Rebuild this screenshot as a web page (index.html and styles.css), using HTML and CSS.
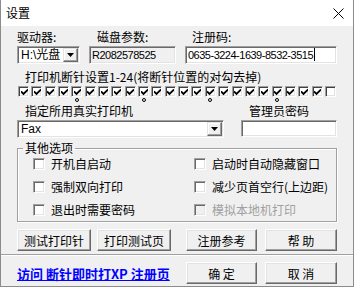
FILE: index.html
```html
<!DOCTYPE html>
<html lang="zh-CN">

<head>
    <meta charset="UTF-8">
    <meta name="viewport" content="width=device-width, initial-scale=1.0">
    <title>设置</title>
    <link rel="stylesheet" href="styles.css">
</head>

<body>
    <div class="window">
        <div class="titlebar">
            <span class="title">设置</span>
            <svg class="close" width="11" height="11" viewBox="0 0 11 11">
                <path d="M0.5 0.5 L10.5 10.5 M10.5 0.5 L0.5 10.5" stroke="#000" stroke-width="1" fill="none" />
            </svg>
        </div>

        <div class="content">
            <div class="fields">
                <div class="field drive">
                    <label>驱动器:</label>
                    <div class="combo">
                        <span class="combo-text">H:\光盘</span>
                        <span class="drop"><svg width="7" height="4" viewBox="0 0 7 4"><path d="M0 0H7L3.5 4Z" /></svg></span>
                    </div>
                </div>
                <div class="field disk">
                    <label>磁盘参数:</label>
                    <div class="edit readonly">R2082578525</div>
                </div>
                <div class="field reg">
                    <label>注册码:</label>
                    <div class="edit">0635-3224-1639-8532-3515<span class="caret"></span></div>
                </div>
            </div>

            <div class="pins-title">打印机断针设置1-24(将断针位置的对勾去掉)</div>
            <div class="pins">
                <div class="pin-col"><span class="pin on"><svg viewBox="0 0 7 7"><path d="M0 2.5 L2.5 5 L7 0.5" /></svg></span></div>
                <div class="pin-col"><span class="pin on"><svg viewBox="0 0 7 7"><path d="M0 2.5 L2.5 5 L7 0.5" /></svg></span></div>
                <div class="pin-col"><span class="pin on"><svg viewBox="0 0 7 7"><path d="M0 2.5 L2.5 5 L7 0.5" /></svg></span></div>
                <div class="pin-col"><span class="pin on"><svg viewBox="0 0 7 7"><path d="M0 2.5 L2.5 5 L7 0.5" /></svg></span></div>
                <div class="pin-col"><span class="pin on"><svg viewBox="0 0 7 7"><path d="M0 2.5 L2.5 5 L7 0.5" /></svg></span><span class="mark"></span></div>
                <div class="pin-col"><span class="pin on"><svg viewBox="0 0 7 7"><path d="M0 2.5 L2.5 5 L7 0.5" /></svg></span></div>
                <div class="pin-col"><span class="pin on"><svg viewBox="0 0 7 7"><path d="M0 2.5 L2.5 5 L7 0.5" /></svg></span></div>
                <div class="pin-col"><span class="pin on"><svg viewBox="0 0 7 7"><path d="M0 2.5 L2.5 5 L7 0.5" /></svg></span></div>
                <div class="pin-col"><span class="pin on"><svg viewBox="0 0 7 7"><path d="M0 2.5 L2.5 5 L7 0.5" /></svg></span></div>
                <div class="pin-col"><span class="pin on"><svg viewBox="0 0 7 7"><path d="M0 2.5 L2.5 5 L7 0.5" /></svg></span><span class="mark"></span></div>
                <div class="pin-col"><span class="pin on"><svg viewBox="0 0 7 7"><path d="M0 2.5 L2.5 5 L7 0.5" /></svg></span></div>
                <div class="pin-col"><span class="pin on"><svg viewBox="0 0 7 7"><path d="M0 2.5 L2.5 5 L7 0.5" /></svg></span></div>
                <div class="pin-col"><span class="pin on"><svg viewBox="0 0 7 7"><path d="M0 2.5 L2.5 5 L7 0.5" /></svg></span></div>
                <div class="pin-col"><span class="pin on"><svg viewBox="0 0 7 7"><path d="M0 2.5 L2.5 5 L7 0.5" /></svg></span></div>
                <div class="pin-col"><span class="pin on"><svg viewBox="0 0 7 7"><path d="M0 2.5 L2.5 5 L7 0.5" /></svg></span><span class="mark"></span></div>
                <div class="pin-col"><span class="pin on"><svg viewBox="0 0 7 7"><path d="M0 2.5 L2.5 5 L7 0.5" /></svg></span></div>
                <div class="pin-col"><span class="pin on"><svg viewBox="0 0 7 7"><path d="M0 2.5 L2.5 5 L7 0.5" /></svg></span></div>
                <div class="pin-col"><span class="pin on"><svg viewBox="0 0 7 7"><path d="M0 2.5 L2.5 5 L7 0.5" /></svg></span></div>
                <div class="pin-col"><span class="pin on"><svg viewBox="0 0 7 7"><path d="M0 2.5 L2.5 5 L7 0.5" /></svg></span></div>
                <div class="pin-col"><span class="pin on"><svg viewBox="0 0 7 7"><path d="M0 2.5 L2.5 5 L7 0.5" /></svg></span><span class="mark"></span></div>
                <div class="pin-col"><span class="pin on"><svg viewBox="0 0 7 7"><path d="M0 2.5 L2.5 5 L7 0.5" /></svg></span></div>
                <div class="pin-col"><span class="pin on"><svg viewBox="0 0 7 7"><path d="M0 2.5 L2.5 5 L7 0.5" /></svg></span></div>
                <div class="pin-col"><span class="pin on"><svg viewBox="0 0 7 7"><path d="M0 2.5 L2.5 5 L7 0.5" /></svg></span></div>
                <div class="pin-col"><span class="pin"></span></div>
            </div>

            <div class="printer-row">
                <div class="field printer">
                    <label>指定所用真实打印机</label>
                    <div class="combo">
                        <span class="combo-text">Fax</span>
                        <span class="drop"><svg width="7" height="4" viewBox="0 0 7 4"><path d="M0 0H7L3.5 4Z" /></svg></span>
                    </div>
                </div>
                <div class="field password">
                    <label>管理员密码</label>
                    <div class="edit short"></div>
                </div>
            </div>

            <fieldset class="group">
                <legend>其他选项</legend>
                <div class="options">
                    <div class="opt"><span class="box"></span>开机自启动</div>
                    <div class="opt"><span class="box"></span>启动时自动隐藏窗口</div>
                    <div class="opt"><span class="box"></span>强制双向打印</div>
                    <div class="opt"><span class="box"></span>减少页首空行(上边距)</div>
                    <div class="opt"><span class="box"></span>退出时需要密码</div>
                    <div class="opt disabled"><span class="box"></span>模拟本地机打印</div>
                </div>
            </fieldset>

            <div class="buttons">
                <button class="btn w74">测试打印针</button>
                <button class="btn w74 gap6">打印测试页</button>
                <button class="btn w71 gap15">注册参考</button>
                <button class="btn w72 gap8">帮 助</button>
            </div>
        </div>

        <div class="separator"></div>

        <div class="footer">
            <a class="link" href="#">访问 断针即时打XP 注册页</a>
            <button class="btn w71">确 定</button>
            <button class="btn w72 gap8">取 消</button>
        </div>
    </div>
</body>

</html>
```

FILE: styles.css
```css
body {
    margin: 0;
    font-family: "Noto Sans CJK SC", sans-serif;
    font-size: 12px;
    color: #000;
}

.window {
    width: 354px;
    height: 287px;
    box-sizing: border-box;
    border: 1px solid #8c8c8c;
    border-top: none;
    background-color: #f0f0f0;
}

.titlebar {
    height: 26px;
    background-color: #fff;
    display: flex;
    align-items: center;
    justify-content: space-between;
    padding: 0 9px 0 5px;
}

.title {
    font-size: 12px;
    line-height: 14px;
}

.content {
    padding: 4px 16px 0 16px;
}

/* top row: drive / disk / registration */
.fields {
    display: flex;
    gap: 9px;
}

.field {
    display: flex;
    flex-direction: column;
    gap: 2px;
}

.field label {
    font-size: 12px;
    line-height: 14px;
    height: 14px;
    white-space: nowrap;
}

.drive {
    width: 63px;
}

.disk {
    width: 87px;
}

.disk label {
    padding-left: 8px;
}

.reg {
    flex: 1;
}

.reg label {
    padding-left: 7px;
}

.edit,
.combo {
    height: 18px;
    box-sizing: border-box;
    border: 1px solid;
    border-color: #a0a0a0 #fff #fff #a0a0a0;
    box-shadow: inset 1px 1px 0 #696969, inset -1px -1px 0 #e3e3e3;
    background-color: #fff;
}

.edit {
    font-family: "Liberation Sans", sans-serif;
    font-size: 11px;
    letter-spacing: -0.5px;
    line-height: 16px;
    padding: 0 2px;
    white-space: nowrap;
    overflow: hidden;
}

.edit.readonly {
    background-color: #f0f0f0;
}

.edit.short {
    height: 17px;
}

.caret {
    display: inline-block;
    width: 1px;
    height: 13px;
    margin-left: 1px;
    background-color: #000;
    vertical-align: -2px;
}

.combo {
    display: flex;
    padding: 1px;
}

.combo-text {
    flex: 1;
    overflow: hidden;
    white-space: nowrap;
    font-family: "Liberation Sans", "Noto Sans CJK SC", sans-serif;
    font-size: 12px;
    line-height: 14px;
    padding-left: 2px;
}

.drop {
    width: 15px;
    box-sizing: border-box;
    border: 1px solid;
    border-color: #e3e3e3 #696969 #696969 #e3e3e3;
    box-shadow: inset -1px -1px 0 #a0a0a0, inset 1px 1px 0 #fff;
    background-color: #f0f0f0;
    display: flex;
    align-items: center;
    justify-content: center;
}

/* pin check row */
.pins-title {
    margin: 6px 0 0 8px;
    line-height: 14px;
    white-space: nowrap;
}

.pins {
    display: flex;
    justify-content: space-between;
    margin: 2px 1px 0 1px;
}

.pin-col {
    display: flex;
    flex-direction: column;
    align-items: center;
    width: 11px;
}

.pin {
    width: 11px;
    height: 11px;
    box-sizing: border-box;
    border: 1px solid;
    border-color: #a0a0a0 #fff #fff #a0a0a0;
    box-shadow: inset 1px 1px 0 #404040, inset -1px -1px 0 #e3e3e3;
    background-color: #fff;
    display: flex;
    align-items: center;
    justify-content: center;
}

.pin svg {
    width: 7px;
    height: 7px;
    margin: 1px 0 0 1px;
}

.pin svg path {
    fill: none;
    stroke: #000;
    stroke-width: 1.8;
}

.mark {
    width: 4px;
    height: 4px;
    box-sizing: border-box;
    border: 1px solid #000;
    border-radius: 50%;
    margin-top: 1px;
}

/* printer + admin password */
.printer-row {
    display: flex;
    gap: 17px;
    margin-top: 2px;
}

.printer {
    width: 207px;
}

.printer label,
.password label {
    padding-left: 8px;
}

.password {
    flex: 1;
}

/* other options group */
.group {
    margin: 3px 0 0;
    padding: 0;
    border: 1px solid #a0a0a0;
    box-shadow: 1px 1px 0 #fff, inset 1px 1px 0 #fff;
}

.group legend {
    margin-left: 5px;
    padding: 0 2px;
    line-height: 14px;
}

.options {
    display: grid;
    grid-template-columns: 161px 1fr;
    grid-auto-rows: 23px;
    padding-left: 15px;
    margin-top: -3px;
}

.opt {
    display: flex;
    align-items: center;
    gap: 6px;
    white-space: nowrap;
}

.box {
    width: 12px;
    height: 12px;
    box-sizing: border-box;
    border: 1px solid;
    border-color: #a0a0a0 #fff #fff #a0a0a0;
    box-shadow: inset 1px 1px 0 #696969, inset -1px -1px 0 #e3e3e3;
    background-color: #fff;
}

.opt.disabled {
    color: #a0a0a0;
}

.opt.disabled .box {
    background-color: #f0f0f0;
}

/* buttons */
.buttons {
    display: flex;
    margin-top: 7px;
}

.btn {
    height: 22px;
    box-sizing: border-box;
    border: 1px solid;
    border-color: #fff #696969 #696969 #fff;
    box-shadow: inset -1px -1px 0 #a0a0a0, inset 1px 1px 0 #e3e3e3;
    background-color: #f0f0f0;
    font-family: "Noto Sans CJK SC", sans-serif;
    font-size: 12px;
    padding: 0;
    color: #000;
}

.w74 {
    width: 74px;
}

.w71 {
    width: 71px;
}

.w72 {
    width: 72px;
}

.gap6 {
    margin-left: 6px;
}

.gap8 {
    margin-left: 8px;
}

.gap15 {
    margin-left: 15px;
}

.separator {
    margin-top: 3px;
    border-top: 1px solid #a0a0a0;
    border-bottom: 1px solid #fff;
}

.footer {
    display: flex;
    align-items: center;
    padding: 0 16px;
    margin-top: 6px;
}

.link {
    width: 169px;
    color: #0000ff;
    font-size: 13px;
    font-weight: bold;
    text-decoration: underline;
    white-space: nowrap;
}
```
